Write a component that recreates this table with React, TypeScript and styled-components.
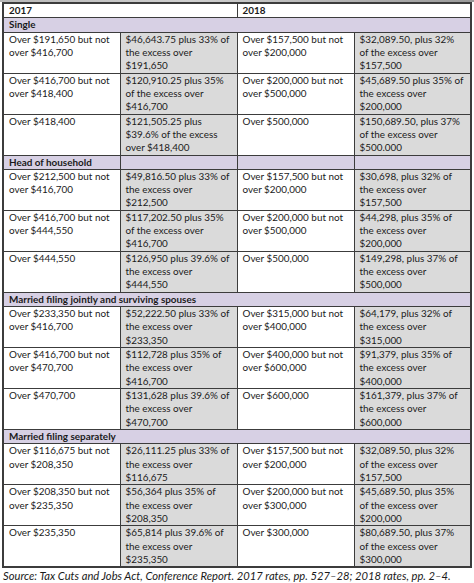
import React from 'react';
import styled, { createGlobalStyle } from 'styled-components';

const GlobalStyle = createGlobalStyle`
    html, body {
        margin: 0;
        padding: 0;
        background: #ffffff;
    }
    body {
        font-family: Lato, 'Open Sans', sans-serif;
        color: #1a1a1a;
    }
`;

type Row = [string, string, string, string];

interface Section {
    title: string;
    split?: boolean;
    rows: Row[];
}

const sections: Section[] = [
    {
        title: 'Single',
        rows: [
            [
                'Over $191,650 but not\nover $416,700',
                '$46,643.75 plus 33% of\nthe excess over\n$191,650',
                'Over $157,500 but not\nover $200,000',
                '$32,089.50, plus 32%\nof the excess over\n$157,500',
            ],
            [
                'Over $416,700 but not\nover $418,400',
                '$120,910.25 plus 35%\nof the excess over\n$416,700',
                'Over $200,000 but not\nover $500,000',
                '$45,689.50 plus 35% of\nthe excess over\n$200,000',
            ],
            [
                'Over $418,400',
                '$121,505.25 plus\n$39.6% of the excess\nover $418,400',
                'Over $500,000',
                '$150,689.50, plus 37%\nof the excess over\n$500.000',
            ],
        ],
    },
    {
        title: 'Head of household',
        split: true,
        rows: [
            [
                'Over $212,500 but not\nover $416,700',
                '$49,816.50 plus 33% of\nthe excess over\n$212,500',
                'Over $157,500 but not\nover $200,000',
                '$30,698, plus 32% of\nthe excess over\n$157,500',
            ],
            [
                'Over $416,700 but not\nover $444,550',
                '$117,202.50 plus 35%\nof the excess over\n$416,700',
                'Over $200,000 but not\nover $500,000',
                '$44,298, plus 35% of\nthe excess over\n$200,000',
            ],
            [
                'Over $444,550',
                '$126,950 plus 39.6% of\nthe excess over\n$444,550',
                'Over $500,000',
                '$149,298, plus 37% of\nthe excess over\n$500,000',
            ],
        ],
    },
    {
        title: 'Married filing jointly and surviving spouses',
        rows: [
            [
                'Over $233,350 but not\nover $416,700',
                '$52,222.50 plus 33% of\nthe excess over\n$233,350',
                'Over $315,000 but not\nover $400,000',
                '$64,179, plus 32% of\nthe excess over\n$315,000',
            ],
            [
                'Over $416,700 but not\nover $470,700',
                '$112,728 plus 35% of\nthe excess over\n$416,700',
                'Over $400,000 but not\nover $600,000',
                '$91,379, plus 35% of\nthe excess over\n$400,000',
            ],
            [
                'Over $470,700',
                '$131,628 plus 39.6% of\nthe excess over\n$470,700',
                'Over $600,000',
                '$161,379, plus 37% of\nthe excess over\n$600,000',
            ],
        ],
    },
    {
        title: 'Married filing separately',
        rows: [
            [
                'Over $116,675 but not\nover $208,350',
                '$26,111.25 plus 33% of\nthe excess over\n$116,675',
                'Over $157,500 but not\nover $200,000',
                '$32,089.50, plus 32%\nof the excess over\n$157,500',
            ],
            [
                'Over $208,350 but not\nover $235,350',
                '$56,364 plus 35% of\nthe excess over\n$208,350',
                'Over $200,000 but not\nover $300,000',
                '$45,689.50, plus 35%\nof the excess over\n$200,000',
            ],
            [
                'Over $235,350',
                '$65,814 plus 39.6% of\nthe excess over\n$235,350',
                'Over $300,000',
                '$80,689.50, plus 37%\nof the excess over\n$300,000',
            ],
        ],
    },
];

const Page = styled.div`
    width: 474px;
    padding: 0 0 0 2px;
    box-sizing: border-box;
`;

const TopEdge = styled.div`
    height: 2px;
    background: linear-gradient(to right, #b8b8b8, #d0d0d0 40%, #9a9a9a);
`;

const Table = styled.table`
    width: 470px;
    table-layout: fixed;
    border-collapse: collapse;
    border: 2px solid #3c3c3c;
    font-size: 9.9px;
    line-height: 13.3px;
`;

const HeadCell = styled.th`
    height: 12px;
    padding: 0 5px;
    text-align: left;
    vertical-align: middle;
    font-weight: 700;
    background: #ffffff;
    border: 1px solid #3c3c3c;
`;

const SectionCell = styled.td`
    height: 12px;
    padding: 0 5px;
    font-weight: 700;
    white-space: nowrap;
    background: #d7d0e4;
    border: 1px solid #3c3c3c;
`;

const Cell = styled.td<{ $shade?: boolean }>`
    height: 40px;
    padding: 0 5px;
    vertical-align: top;
    white-space: pre;
    overflow: hidden;
    background: ${(p) => (p.$shade ? '#dadada' : '#ffffff')};
    border: 1px solid #3c3c3c;
`;

const Source = styled.p`
    margin: 1px 0 0 1px;
    font-size: 11.2px;
    line-height: 14px;
    font-style: italic;
    color: #1a1a1a;
    white-space: nowrap;
`;

const App: React.FC = () => {
    return (
        <>
            <GlobalStyle />
            <TopEdge />
            <Page>
                <Table>
                    <colgroup>
                        <col style={{ width: 117 }} />
                        <col style={{ width: 117 }} />
                        <col style={{ width: 117 }} />
                        <col style={{ width: 117 }} />
                    </colgroup>
                    <thead>
                        <tr>
                            <HeadCell colSpan={2}>2017</HeadCell>
                            <HeadCell colSpan={2}>2018</HeadCell>
                        </tr>
                    </thead>
                    {sections.map((s) => (
                        <tbody key={s.title}>
                            <tr>
                                {s.split ? (
                                    <>
                                        <SectionCell>{s.title}</SectionCell>
                                        <SectionCell />
                                        <SectionCell />
                                        <SectionCell />
                                    </>
                                ) : (
                                    <SectionCell colSpan={4}>{s.title}</SectionCell>
                                )}
                            </tr>
                            {s.rows.map((r, i) => (
                                <tr key={i}>
                                    {r.map((c, j) => (
                                        <Cell key={j} $shade={j % 2 === 1}>
                                            {c}
                                        </Cell>
                                    ))}
                                </tr>
                            ))}
                        </tbody>
                    ))}
                </Table>
                <Source>
                    Source: Tax Cuts and Jobs Act, Conference Report. 2017 rates, pp. 527–28;
                    2018 rates, pp. 2–4.
                </Source>
            </Page>
        </>
    );
};

export default App;
